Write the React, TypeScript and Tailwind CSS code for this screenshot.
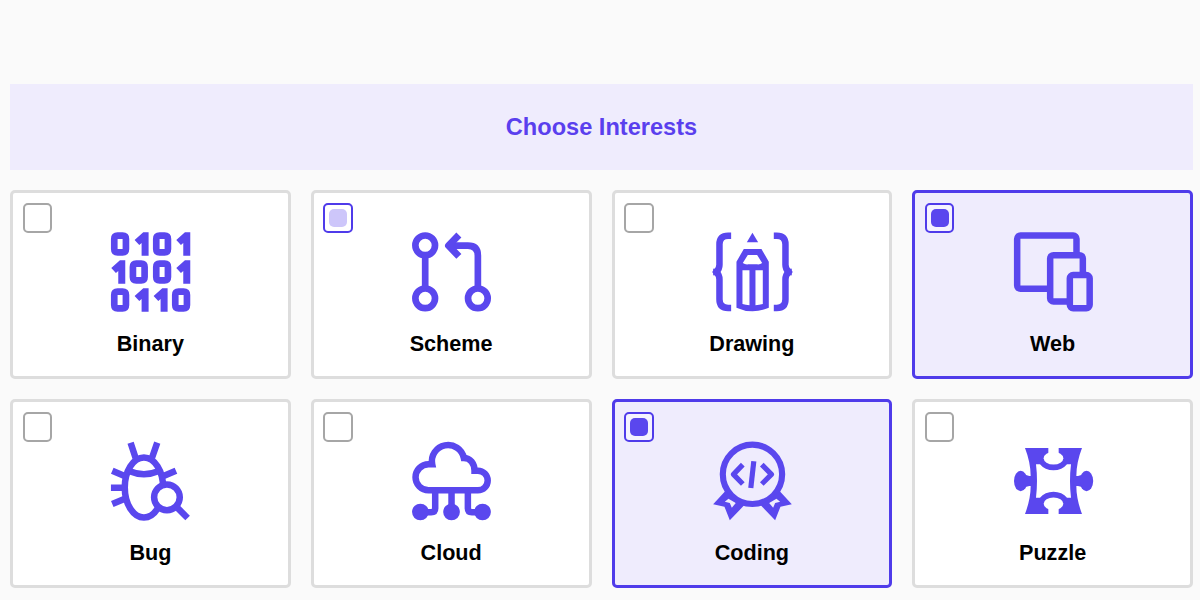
import type { ReactNode } from "react";

const Zero = ({ x, y }: { x: number; y: number }) => (
  <path
    fillRule="evenodd"
    d={`M${x + 20} ${y}h15q20 0 20 20v30q0 20 -20 20h-15q-20 0 -20 -20v-30q0 -20 20 -20zM${x + 20} ${y + 20}v30h15v-30z`}
  />
);
const One = ({ x, y }: { x: number; y: number }) => (
  <path d={`M${x + 42} ${y + 70}h-21v-38l-7 6l-14 -15l26 -23h16z`} />
);

const Binary = () => (
  <>
    <Zero x={34} y={37} />
    <One x={105} y={37} />
    <Zero x={160} y={37} />
    <One x={230} y={37} />
    <One x={35} y={121} />
    <Zero x={90} y={121} />
    <Zero x={160} y={121} />
    <One x={230} y={121} />
    <Zero x={34} y={205} />
    <One x={105} y={205} />
    <One x={162} y={205} />
    <Zero x={217} y={205} />
  </>
);

const Scheme = () => (
  <g fill="none" stroke="currentColor" strokeWidth="20">
    <circle cx="76" cy="76" r="29.5" />
    <circle cx="76" cy="235" r="29.5" />
    <circle cx="234" cy="235" r="29.5" />
    <path d="M76 105v101M234 206V107Q234 77 204 77H150" />
    <path d="M177 45L146 77L177 109" strokeLinejoin="round" strokeWidth="21" />
  </g>
);

const Brace = () => (
  <>
    <path
      d="M87 47H78Q52 47 52 73V134Q52 146 43 156Q52 166 52 178V238Q52 264 78 264H87"
      fill="none"
      stroke="currentColor"
      strokeWidth="19.5"
    />
    <path d="M33 146h14v20h-14z" />
  </>
);

const Drawing = () => (
  <>
    <Brace />
    <g transform="translate(302 0) scale(-1 1)">
      <Brace />
    </g>
    <path d="M151 38L168 67H134z" />
    <path
      fillRule="evenodd"
      d="M125 87H178L200 125V263Q151 285 103 263V125ZM137 105L122 129Q129 134 138 133H165Q174 134 180 129L165 105ZM121 151V252Q131 255 142 256V151ZM160 151V256Q171 255 182 252V151Z"
    />
  </>
);

const Web = () => (
  <g fill="#efecfd" stroke="currentColor" strokeWidth="19.5">
    <rect x="41.5" y="46.5" width="178" height="160" rx="10" />
    <rect x="140.5" y="105.5" width="98" height="139" rx="10" />
    <rect x="199.5" y="165" width="59.5" height="99.5" rx="10" />
  </g>
);

const Bug = () => (
  <g fill="none" stroke="currentColor" strokeWidth="19.5">
    <path d="M93 38L108 84M173 38L157 84M38 122L75 138M34 173H70M38 222L74 207M229 122L190 139" />
    <ellipse cx="133" cy="172.500" rx="57.500" ry="90" />
    <path d="M88 123Q133 142 178 123" />
    <circle cx="202" cy="202" r="38.5" fill="#fff" />
    <path d="M230 230L264 264" />
  </g>
);

const Cloud = () => (
  <>
    <g fill="none" stroke="currentColor" strokeWidth="19.5">
      <path d="M86 181H234A29.500 29.500 0 0 0 234 122H224C224 100 211 84 192 84A48 48 0 0 0 97 103H86A39 39 0 0 0 86 181Z" />
      <path d="M155 188V235M106 188V235Q106 247 94 247H62M204 188V235Q204 247 216 247H248" />
    </g>
    <circle cx="61.5" cy="246" r="25" />
    <circle cx="155" cy="246" r="25" />
    <circle cx="248" cy="246" r="25" />
  </>
);

const Ribbon = () => (
  <path
    fillRule="evenodd"
    d="M69 184L33 223L67 230L83 271L126 226ZM79 206L68 215L83 219L89 233L101 219Z"
  />
);

const Coding = () => (
  <>
    <g fill="none" stroke="currentColor" strokeWidth="18.5">
      <circle cx="151" cy="133" r="89" />
      <path d="M122 104L94 133L122 162M179 104L208 133L179 162" strokeLinejoin="round" strokeWidth="15.5" />
      <path d="M155 94L146 174" strokeWidth="15.5" />
    </g>
    <Ribbon />
    <g transform="translate(302 0) scale(-1 1)">
      <Ribbon />
    </g>
  </>
);

const Puzzle = () => (
  <>
    <path d="M65 54H236Q219 98 219 138Q214 153 219 168Q219 207 236 252H65Q82 207 82 168Q87 153 82 138Q82 98 65 54Z" />
    <path d="M60 129Q69 138 78 138H92V168H78Q69 168 60 177ZM242 129Q233 138 224 138H210V168H224Q233 168 242 177Z" />
    <ellipse cx="52" cy="153" rx="20" ry="30.500" />
    <ellipse cx="249.500" cy="153" rx="20" ry="30.500" />
    <g fill="#fff">
      <path d="M98 103H110A48 39 0 0 0 191 103H203Q197 153 203 203H191A48 39 0 0 0 110 203H98Q104 153 98 103Z" />
      <path d="M135 53h31v18h-31zM135 235h31v18h-31z" />
      <ellipse cx="150.500" cy="84.500" rx="29.500" ry="19" />
      <ellipse cx="150.500" cy="221.500" rx="29.500" ry="19" />
    </g>
  </>
);

type State = "off" | "hover" | "on";
type Item = { label: string; state: State; viewBox: string; icon: ReactNode };

const items: Item[] = [
  { label: "Binary", state: "off", viewBox: "31.2 36 240 240", icon: <Binary /> },
  { label: "Scheme", state: "hover", viewBox: "33.4 36 240 240", icon: <Scheme /> },
  { label: "Drawing", state: "off", viewBox: "29.6 36 240 240", icon: <Drawing /> },
  { label: "Web", state: "on", viewBox: "29 36 240 240", icon: <Web /> },
  { label: "Bug", state: "off", viewBox: "31.2 33 240 240", icon: <Bug /> },
  { label: "Cloud", state: "off", viewBox: "33.4 33 240 240", icon: <Cloud /> },
  { label: "Coding", state: "on", viewBox: "29.6 33 240 240", icon: <Coding /> },
  { label: "Puzzle", state: "off", viewBox: "29 33 240 240", icon: <Puzzle /> },
];

const cardStyle: Record<State, string> = {
  off: "border-[#dddddd] bg-white",
  hover: "border-[#dddddd] bg-white",
  on: "border-[#4f3bea] bg-[#efecfd]",
};
const boxStyle: Record<State, string> = {
  off: "border-[#a6a6a6] bg-white",
  hover: "border-[#4f3bea] bg-white",
  on: "border-[#4f3bea] bg-white/40",
};
const dotStyle: Record<State, string> = {
  off: "bg-transparent",
  hover: "bg-[#cdc6fa]",
  on: "bg-[#5a47ee]",
};

function Card({ label, state, viewBox, icon }: Item) {
  return (
    <label className={`relative flex h-[189px] flex-col items-center rounded-[5px] border-3 pt-[39px] ${cardStyle[state]}`}>
      <span
        className={`absolute left-[9.6px] top-[10px] flex size-[29.5px] items-center justify-center rounded-[5px] border-2 ${boxStyle[state]}`}
      >
        <span className={`size-[18px] rounded-[5px] ${dotStyle[state]}`} />
      </span>
      <svg viewBox={viewBox} className="size-20 shrink-0 overflow-visible text-[#5a47ee]" fill="currentColor">
        {icon}
      </svg>
      <span className="mt-[19px] text-[21.6px] leading-[25px] font-bold text-black">{label}</span>
    </label>
  );
}

export default function App() {
  return (
    <main className="h-[600px] overflow-hidden bg-[#fafafa] pt-[84px] pr-[7px] pl-[10px] font-['Liberation_Sans',Arial,sans-serif]">
      <h1 className="flex h-[86px] items-center justify-center bg-[#efecfd] pt-[2px] text-[23.6px] font-bold text-[#5a3fee]">
        Choose Interests
      </h1>
      <section className="mt-5 grid grid-cols-4 gap-5">
        {items.map((item) => (
          <Card key={item.label} {...item} />
        ))}
      </section>
    </main>
  );
}
